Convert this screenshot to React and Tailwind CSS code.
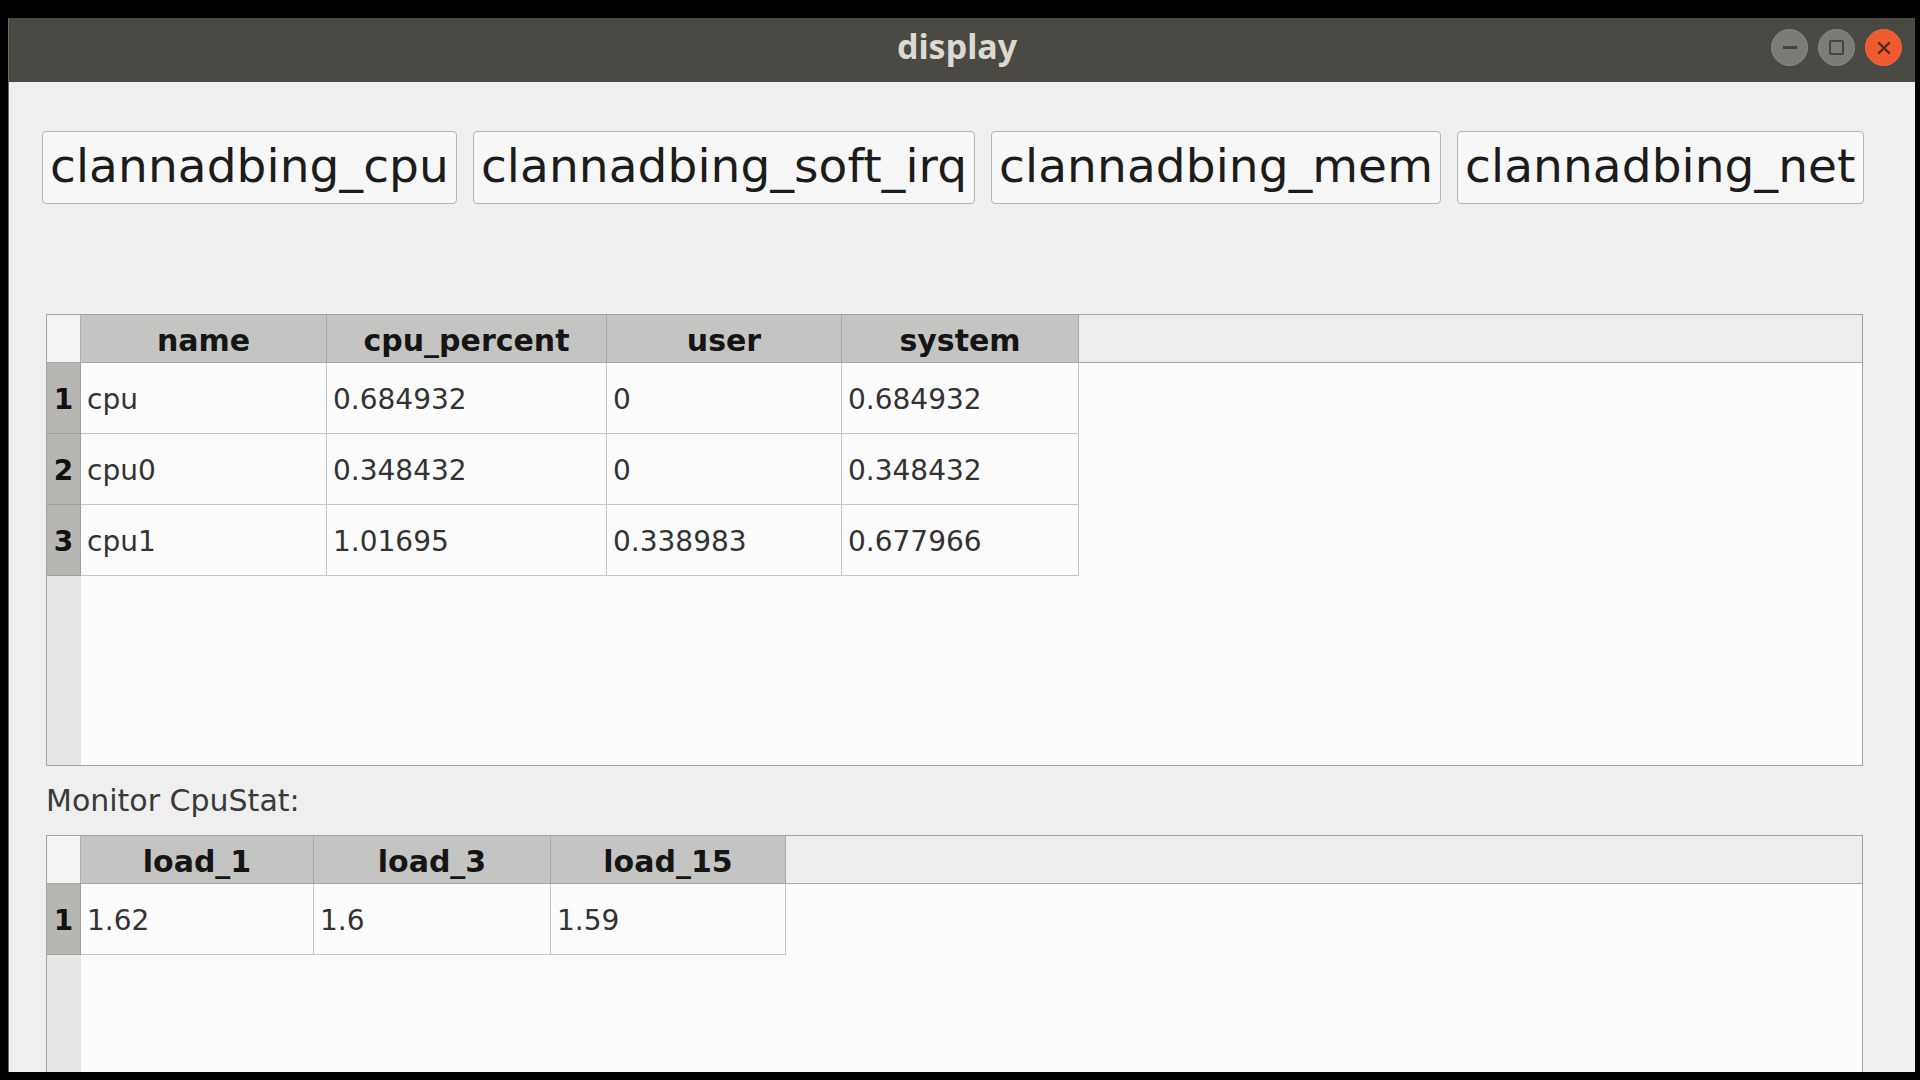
import React from "react";

const FONT = { fontFamily: '"DejaVu Sans", "Liberation Sans", sans-serif' };

function DataTable({ columns, rows, height }) {
  return (
    <div
      className="ml-[4px] w-[1817px] border border-[#a4a4a4] bg-[#fcfcfc] flex flex-col overflow-hidden shrink-0"
      style={{ height }}
    >
      <div className="flex h-[48px] shrink-0 border-b border-[#a8a8a8] bg-[#ededed]">
        <div className="w-[34px] shrink-0 bg-[#f3f3f3] border-r border-[#b0b0b0]" />
        {columns.map((c) => (
          <div
            key={c.name}
            className="shrink-0 bg-[#c4c4c2] border-r border-[#a8a8a8] flex items-center justify-center pt-[3px] text-[30px] font-bold text-[#151515]"
            style={{ width: c.width }}
          >
            {c.name}
          </div>
        ))}
        <div className="flex-1" />
      </div>
      <div className="flex flex-1">
        <div className="w-[34px] shrink-0 bg-[#e6e6e6] flex flex-col">
          {rows.map((r, i) => (
            <div
              key={i}
              className="h-[71px] bg-[#b6b6b3] border-b border-r border-[#a0a0a0] flex items-center justify-center pt-[4px] text-[28px] font-bold text-[#111]"
            >
              {i + 1}
            </div>
          ))}
        </div>
        <div className="flex flex-col flex-1">
          {rows.map((r, i) => (
            <div key={i} className="flex h-[71px]">
              {r.map((v, j) => (
                <div
                  key={j}
                  className="shrink-0 border-r border-b border-[#c6c6c6] flex items-center pl-[6px] pt-[3px] text-[28px] text-[#333333]"
                  style={{ width: columns[j].width }}
                >
                  {v}
                </div>
              ))}
            </div>
          ))}
        </div>
      </div>
    </div>
  );
}

export default function App() {
  const buttons = ["clannadbing_cpu", "clannadbing_soft_irq", "clannadbing_mem", "clannadbing_net"];
  const cols1 = [
    { name: "name", width: 246 },
    { name: "cpu_percent", width: 280 },
    { name: "user", width: 235 },
    { name: "system", width: 237 },
  ];
  const rows1 = [
    ["cpu", "0.684932", "0", "0.684932"],
    ["cpu0", "0.348432", "0", "0.348432"],
    ["cpu1", "1.01695", "0.338983", "0.677966"],
  ];
  const cols2 = [
    { name: "load_1", width: 233 },
    { name: "load_3", width: 237 },
    { name: "load_15", width: 235 },
  ];
  const rows2 = [["1.62", "1.6", "1.59"]];

  return (
    <div className="w-[1920px] h-[1080px] bg-black flex flex-col pt-[18px] pl-[8px] pr-[5px] pb-[8px] overflow-hidden" style={FONT}>
      <div className="flex-1 flex flex-col overflow-hidden border-l border-[#6b6b6b]">
        <div className="h-[64px] shrink-0 bg-[#4a4944] relative flex items-center justify-center">
          <span
            className="text-[34px] font-bold text-[#dcd9d0] leading-none -mt-[8px] -ml-[10px]"
            style={{ fontFamily: '"Noto Sans", "Open Sans", sans-serif' }}
          >
            display
          </span>
          <div className="absolute right-[13px] top-[11px] flex gap-[10px]">
            <div className="w-[37px] h-[37px] rounded-full bg-[#7c7b75] border border-[#8a8983] flex items-center justify-center">
              <div className="w-[14px] h-[3px] bg-[#45443f]" />
            </div>
            <div className="w-[37px] h-[37px] rounded-full bg-[#7c7b75] border border-[#8a8983] flex items-center justify-center">
              <div className="w-[15px] h-[15px] border-[2px] border-[#45443f] rounded-[2px]" />
            </div>
            <div className="w-[37px] h-[37px] rounded-full bg-[#ee5b31] border border-[#f06a42] flex items-center justify-center">
              <svg width="14" height="14" viewBox="0 0 14 14">
                <path d="M2 2 L12 12 M12 2 L2 12" stroke="#4a2a1e" strokeWidth="2.2" strokeLinecap="round" />
              </svg>
            </div>
          </div>
        </div>
        <div className="flex-1 bg-[#efefef] pl-[33px] pt-[49px] flex flex-col overflow-hidden">
          <div className="flex gap-[16px] h-[73px] shrink-0">
            {buttons.map((b) => (
              <div
                key={b}
                className="h-[73px] px-[7px] bg-[#f7f7f7] border border-[#b4b4b4] rounded-[4px] flex items-center text-[47px] tracking-[0.1px] text-[#1c1c1c] leading-none"
              >
                <span className="-mt-[4px]">{b}</span>
              </div>
            ))}
          </div>
          <div className="h-[110px] shrink-0" />
          <DataTable columns={cols1} rows={rows1} height={452} />
          <div className="h-[69px] shrink-0 ml-[4px] flex items-center text-[30px] text-[#3a3a3a]">
            Monitor CpuStat:
          </div>
          <DataTable columns={cols2} rows={rows2} height={300} />
        </div>
      </div>
    </div>
  );
}
